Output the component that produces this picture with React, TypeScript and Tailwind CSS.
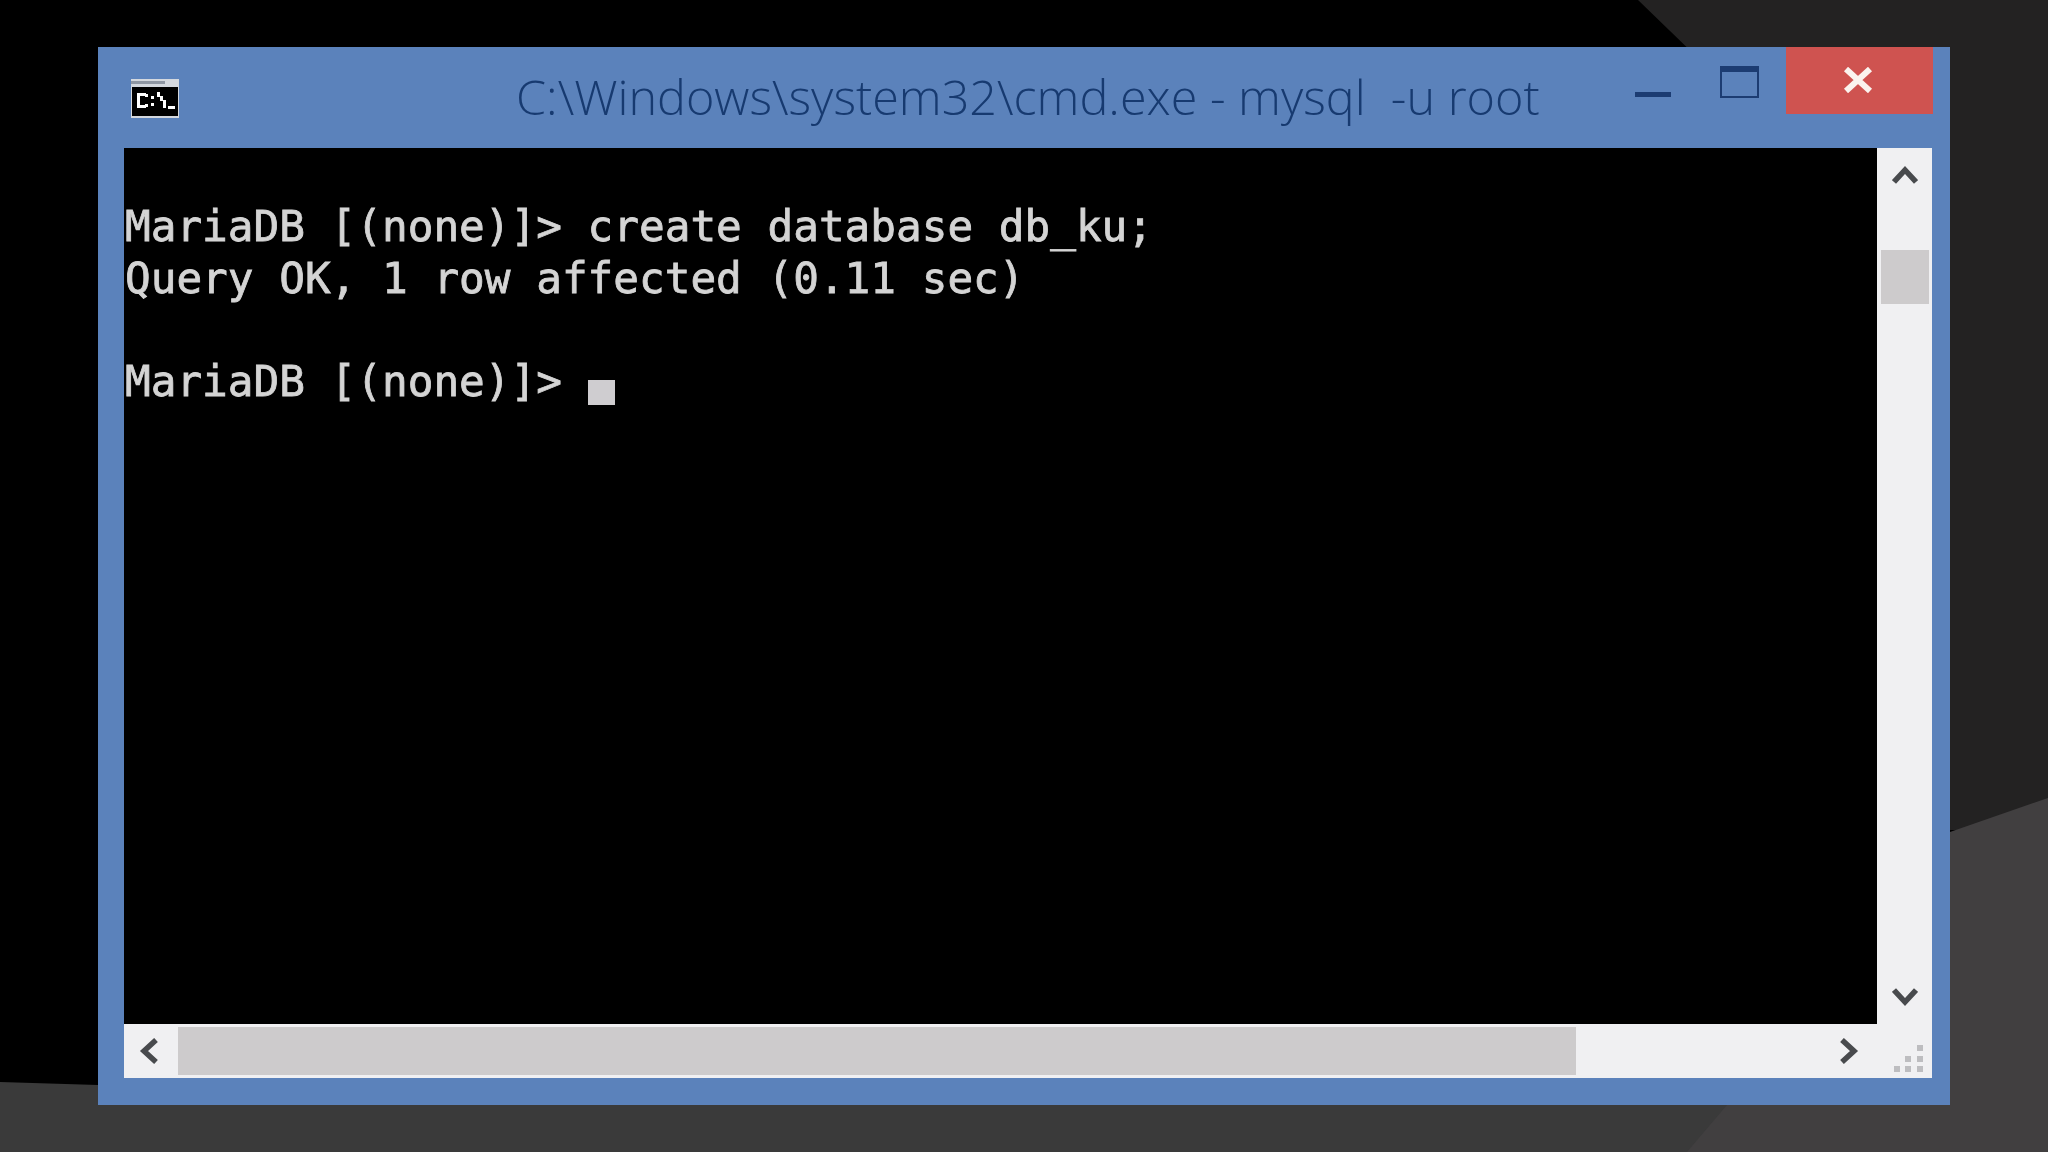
const Chevron = ({ points, className }: { points: string; className: string }) => (
  <svg viewBox="0 0 26 26" className={className} fill="none">
    <polyline points={points} stroke="#484a4d" strokeWidth="5.5" />
  </svg>
);

const CmdIcon = () => (
  <svg viewBox="0 0 48 39" className="w-[48px] h-[39px]">
    <rect width="48" height="39" fill="#d4d8de" />
    <rect x="0" y="2" width="34" height="3" fill="#8f97a3" />
    <rect x="1" y="8" width="46" height="29" fill="#000" />
    {/* C:\_ in block pixels */}
    <g fill="#fff">
      <path d="M6 14h9v3H9v9h6v3H6z" />
      <rect x="14" y="15" width="3" height="3" />
      <rect x="14" y="25" width="3" height="3" />
      <rect x="20" y="17" width="3" height="3" />
      <rect x="20" y="24" width="3" height="3" />
      <path d="M26 13h3v4h3v4h3v8h-3v-7h-3v-4h-3z" />
      <rect x="37" y="27" width="7" height="3" />
    </g>
  </svg>
);

const Grip = () => (
  <svg viewBox="0 0 34 32" className="w-[34px] h-[32px]" fill="#bdbdc0">
    <rect x="24" y="2" width="6" height="6" />
    <rect x="12" y="13" width="6" height="6" />
    <rect x="24" y="13" width="6" height="6" />
    <rect x="1" y="23" width="6" height="6" />
    <rect x="12" y="23" width="6" height="6" />
    <rect x="24" y="23" width="6" height="6" />
  </svg>
);

export default function App() {
  return (
    <div className="relative w-[2048px] h-[1152px] overflow-hidden bg-black">
      <svg viewBox="0 0 2048 1152" className="absolute inset-0 w-full h-full">
        <polygon points="1638,0 2048,0 2048,830 1700,830 1700,60" fill="#232222" />
        <polygon points="0,1082 98,1085 1950,1085 1950,1152 0,1152" fill="#3a3a3a" />
        <polygon points="2048,798 1950,832 1950,1105 1727,1105 1687,1152 2048,1152" fill="#413f40" />
      </svg>

      <div className="relative pl-[98px] pt-[47px]">
        <div className="w-[1852px] h-[1058px] flex flex-col bg-[#5b82bb]">
          {/* title bar */}
          <div className="h-[101px] flex items-start shrink-0">
            <div className="ml-[33px] mt-[32px]">
              <CmdIcon />
            </div>
            <span className="ml-[337px] mt-[21px] w-[1082px] whitespace-pre text-[48.5px] leading-[56px] font-light text-[#173a70] blur-[0.4px] font-['Open_Sans',sans-serif]">
              {'C:\\Windows\\system32\\cmd.exe - mysql  -u root'}
            </span>
            <div className="ml-[37px] mt-[45px] w-[36px] h-[5px] bg-[#1c3c72]" />
            <div className="ml-[49px] mt-[19px] w-[39px] h-[32px] border-2 border-t-[6px] border-[#1c3c72]" />
            <div className="ml-[27px] w-[147px] h-[67px] bg-[#cf5350] flex items-start justify-center pr-[4px]">
              <svg viewBox="0 0 30 26" className="w-[30px] h-[26px] mt-[20px]">
                <path d="M3 2 L27 24 M27 2 L3 24" stroke="#fbf3ee" strokeWidth="6" />
              </svg>
            </div>
          </div>

          {/* client area */}
          <div className="ml-[26px] mr-[18px] h-[930px] flex flex-col bg-[#f0f0f2]">
            <div className="h-[876px] flex">
              <div className="flex-1 bg-black pt-[53px] pl-[1px] text-[42.7px] leading-[51.5px] text-[#d4d4d4] whitespace-pre blur-[0.4px] [-webkit-text-stroke:0.8px_#d4d4d4] font-['DejaVu_Sans_Mono',monospace]">
                <div>MariaDB [(none)]&gt; create database db_ku;</div>
                <div>Query OK, 1 row affected (0.11 sec)</div>
                <div>&nbsp;</div>
                <div>
                  MariaDB [(none)]&gt;{' '}
                  <span className="inline-block w-[27px] h-[25px] bg-[#cfcdd0] align-[-9px]" />
                </div>
              </div>
              <div className="w-[55px] flex flex-col items-center">
                <Chevron points="2,20 13,8 24,20" className="w-[26px] h-[26px] mt-[14px]" />
                <div className="w-[48px] h-[54px] mt-[62px] bg-[#cdcbcc]" />
                <Chevron points="2,6 13,18 24,6" className="w-[26px] h-[26px] mt-[680px]" />
              </div>
            </div>
            <div className="h-[54px] flex items-center">
              <div className="w-[54px] flex justify-center pr-[5px]">
                <Chevron points="20,2 8,13 20,24" className="w-[26px] h-[26px]" />
              </div>
              <div className="w-[1398px] h-[48px] bg-[#cdcbcc]" />
              <Chevron points="6,2 18,13 6,24" className="w-[26px] h-[26px] ml-[260px]" />
              <div className="ml-[31px] mt-[16px]">
                <Grip />
              </div>
            </div>
          </div>
        </div>
      </div>
    </div>
  );
}
